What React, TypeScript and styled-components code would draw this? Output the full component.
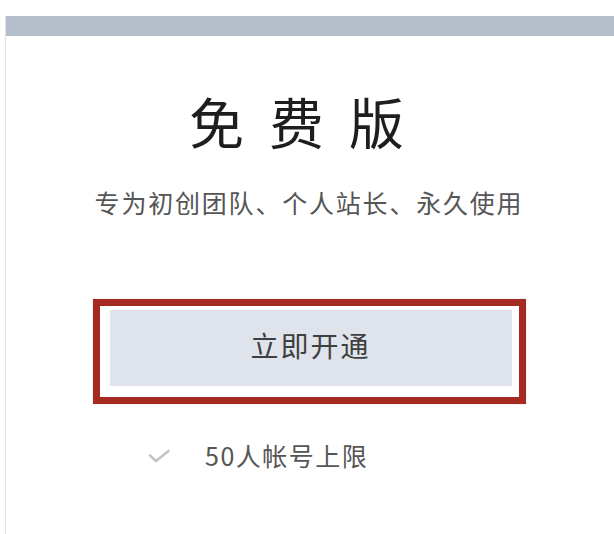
import React from "react";
import styled, { createGlobalStyle } from "styled-components";

const GlobalStyle = createGlobalStyle`
  html, body {
    margin: 0;
    padding: 0;
    background: #ffffff;
    overflow: hidden;
  }
  body {
    font-family: "Noto Sans CJK SC", "Noto Sans", sans-serif;
  }
`;

const Page = styled.div`
  width: 614px;
  height: 534px;
  padding: 16px 0 0 5px;
  box-sizing: border-box;
  overflow: hidden;
`;

const PlanCard = styled.section`
  width: 606px;
  min-height: 560px;
  border-left: 1px solid #e2e2e2;
  background: #ffffff;
  display: flex;
  flex-direction: column;
`;

const PlanTopBar = styled.div`
  height: 20px;
  margin-right: -10px;
  background: #b5bfcb;
`;

const PlanBody = styled.div`
  display: flex;
  flex-direction: column;
  align-items: center;
  padding-top: 57px;
`;

const PlanTitle = styled.h2`
  margin: 0;
  font-size: 55px;
  line-height: 55px;
  font-weight: 400;
  color: #1e1e1e;
  letter-spacing: 25px;
`;

const PlanDesc = styled.p`
  margin: 42px 0 0;
  font-size: 25px;
  line-height: 25px;
  color: #555555;
  letter-spacing: 1.8px;
`;

const Highlight = styled.div`
  margin-top: 84px;
  border: 7px solid #a52a22;
  padding: 4px 7px 11px 10px;
  box-shadow: 0 0 1px rgba(165, 42, 34, 0.4);
`;

const OpenButton = styled.button`
  display: flex;
  align-items: center;
  justify-content: center;
  width: 402px;
  height: 76px;
  border: none;
  background: #dfe3eb;
  font-family: "Noto Sans CJK SC", "Noto Sans", sans-serif;
  font-size: 28px;
  color: #3f3f3f;
  letter-spacing: 2px;
  padding: 0 0 6px 0;
  cursor: pointer;
`;

const FeatureList = styled.ul`
  list-style: none;
  margin: 39px 0 0;
  padding: 0 0 0 142px;
  display: flex;
  flex-direction: column;
  gap: 16px;
`;

const FeatureItem = styled.li`
  display: flex;
  align-items: center;
  gap: 35px;
  font-size: 25px;
  line-height: 25px;
  color: #555555;
  letter-spacing: 1.5px;
`;

const CheckIcon = () => (
  <svg width="22" height="14" viewBox="0 0 22 14" fill="none">
    <polyline
      points="2,6.5 8,12 20.5,2"
      stroke="#c3c3c3"
      strokeWidth="2.6"
      strokeLinecap="round"
      strokeLinejoin="round"
    />
  </svg>
);

const features = ["50人帐号上限"];

export default function App() {
  return (
    <>
      <GlobalStyle />
      <Page>
        <PlanCard>
          <PlanTopBar />
          <PlanBody>
            <PlanTitle>免费版</PlanTitle>
            <PlanDesc>专为初创团队、个人站长、永久使用</PlanDesc>
            <Highlight>
              <OpenButton>立即开通</OpenButton>
            </Highlight>
          </PlanBody>
          <FeatureList>
            {features.map((f) => (
              <FeatureItem key={f}>
                <CheckIcon />
                <span>{f}</span>
              </FeatureItem>
            ))}
          </FeatureList>
        </PlanCard>
      </Page>
    </>
  );
}
